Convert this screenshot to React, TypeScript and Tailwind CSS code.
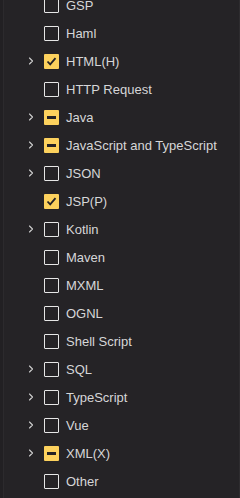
import { ChevronRight } from 'lucide-react';

type Item = { label: string; state: 'off' | 'on' | 'mixed'; expand?: boolean };

const items: Item[] = [
  { label: 'GSP', state: 'off' },
  { label: 'Haml', state: 'off' },
  { label: 'HTML(H)', state: 'on', expand: true },
  { label: 'HTTP Request', state: 'off' },
  { label: 'Java', state: 'mixed', expand: true },
  { label: 'JavaScript and TypeScript', state: 'mixed', expand: true },
  { label: 'JSON', state: 'off', expand: true },
  { label: 'JSP(P)', state: 'on' },
  { label: 'Kotlin', state: 'off', expand: true },
  { label: 'Maven', state: 'off' },
  { label: 'MXML', state: 'off' },
  { label: 'OGNL', state: 'off' },
  { label: 'Shell Script', state: 'off' },
  { label: 'SQL', state: 'off', expand: true },
  { label: 'TypeScript', state: 'off', expand: true },
  { label: 'Vue', state: 'off', expand: true },
  { label: 'XML(X)', state: 'mixed', expand: true },
  { label: 'Other', state: 'off' },
];

function Box({ state }: { state: Item['state'] }) {
  if (state === 'off') {
    return <div className="w-[15px] h-[15px] border border-[#e6e6e6] rounded-[1px]" />;
  }
  return (
    <div className="w-[15px] h-[15px] bg-[#fcd15d] rounded-[1px] flex items-center justify-center">
      {state === 'on' ? (
        <svg width="11" height="11" viewBox="0 0 11 11">
          <path d="M1.5 5.5 L4.2 8.3 L9.5 2.2" stroke="#232125" strokeWidth="1.8" fill="none" />
        </svg>
      ) : (
        <div className="w-[9px] h-[3px] bg-[#232125]" />
      )}
    </div>
  );
}

export default function App() {
  return (
    <div className="w-[240px] h-[498px] overflow-hidden bg-[#252326] flex" style={{ fontFamily: '"Liberation Sans", Arial, sans-serif' }}>
      <div className="w-[4px] bg-[#222023] border-r border-[#2c2a2d]" />
      <div className="flex-1 flex flex-col mt-[-9px]">
        {items.map((it) => (
          <div key={it.label} className="h-[28px] flex items-center shrink-0">
            <div className="w-[40px] flex justify-end pr-[7px]">
              {it.expand && <ChevronRight size={12} strokeWidth={2.2} className="text-[#cfcfcf]" />}
            </div>
            <Box state={it.state} />
            <span className="ml-[7px] text-[13px] text-[#d6d6d8] leading-none whitespace-nowrap">{it.label}</span>
          </div>
        ))}
      </div>
      <div className="w-[1px] bg-[#2e2c2f]" />
    </div>
  );
}
